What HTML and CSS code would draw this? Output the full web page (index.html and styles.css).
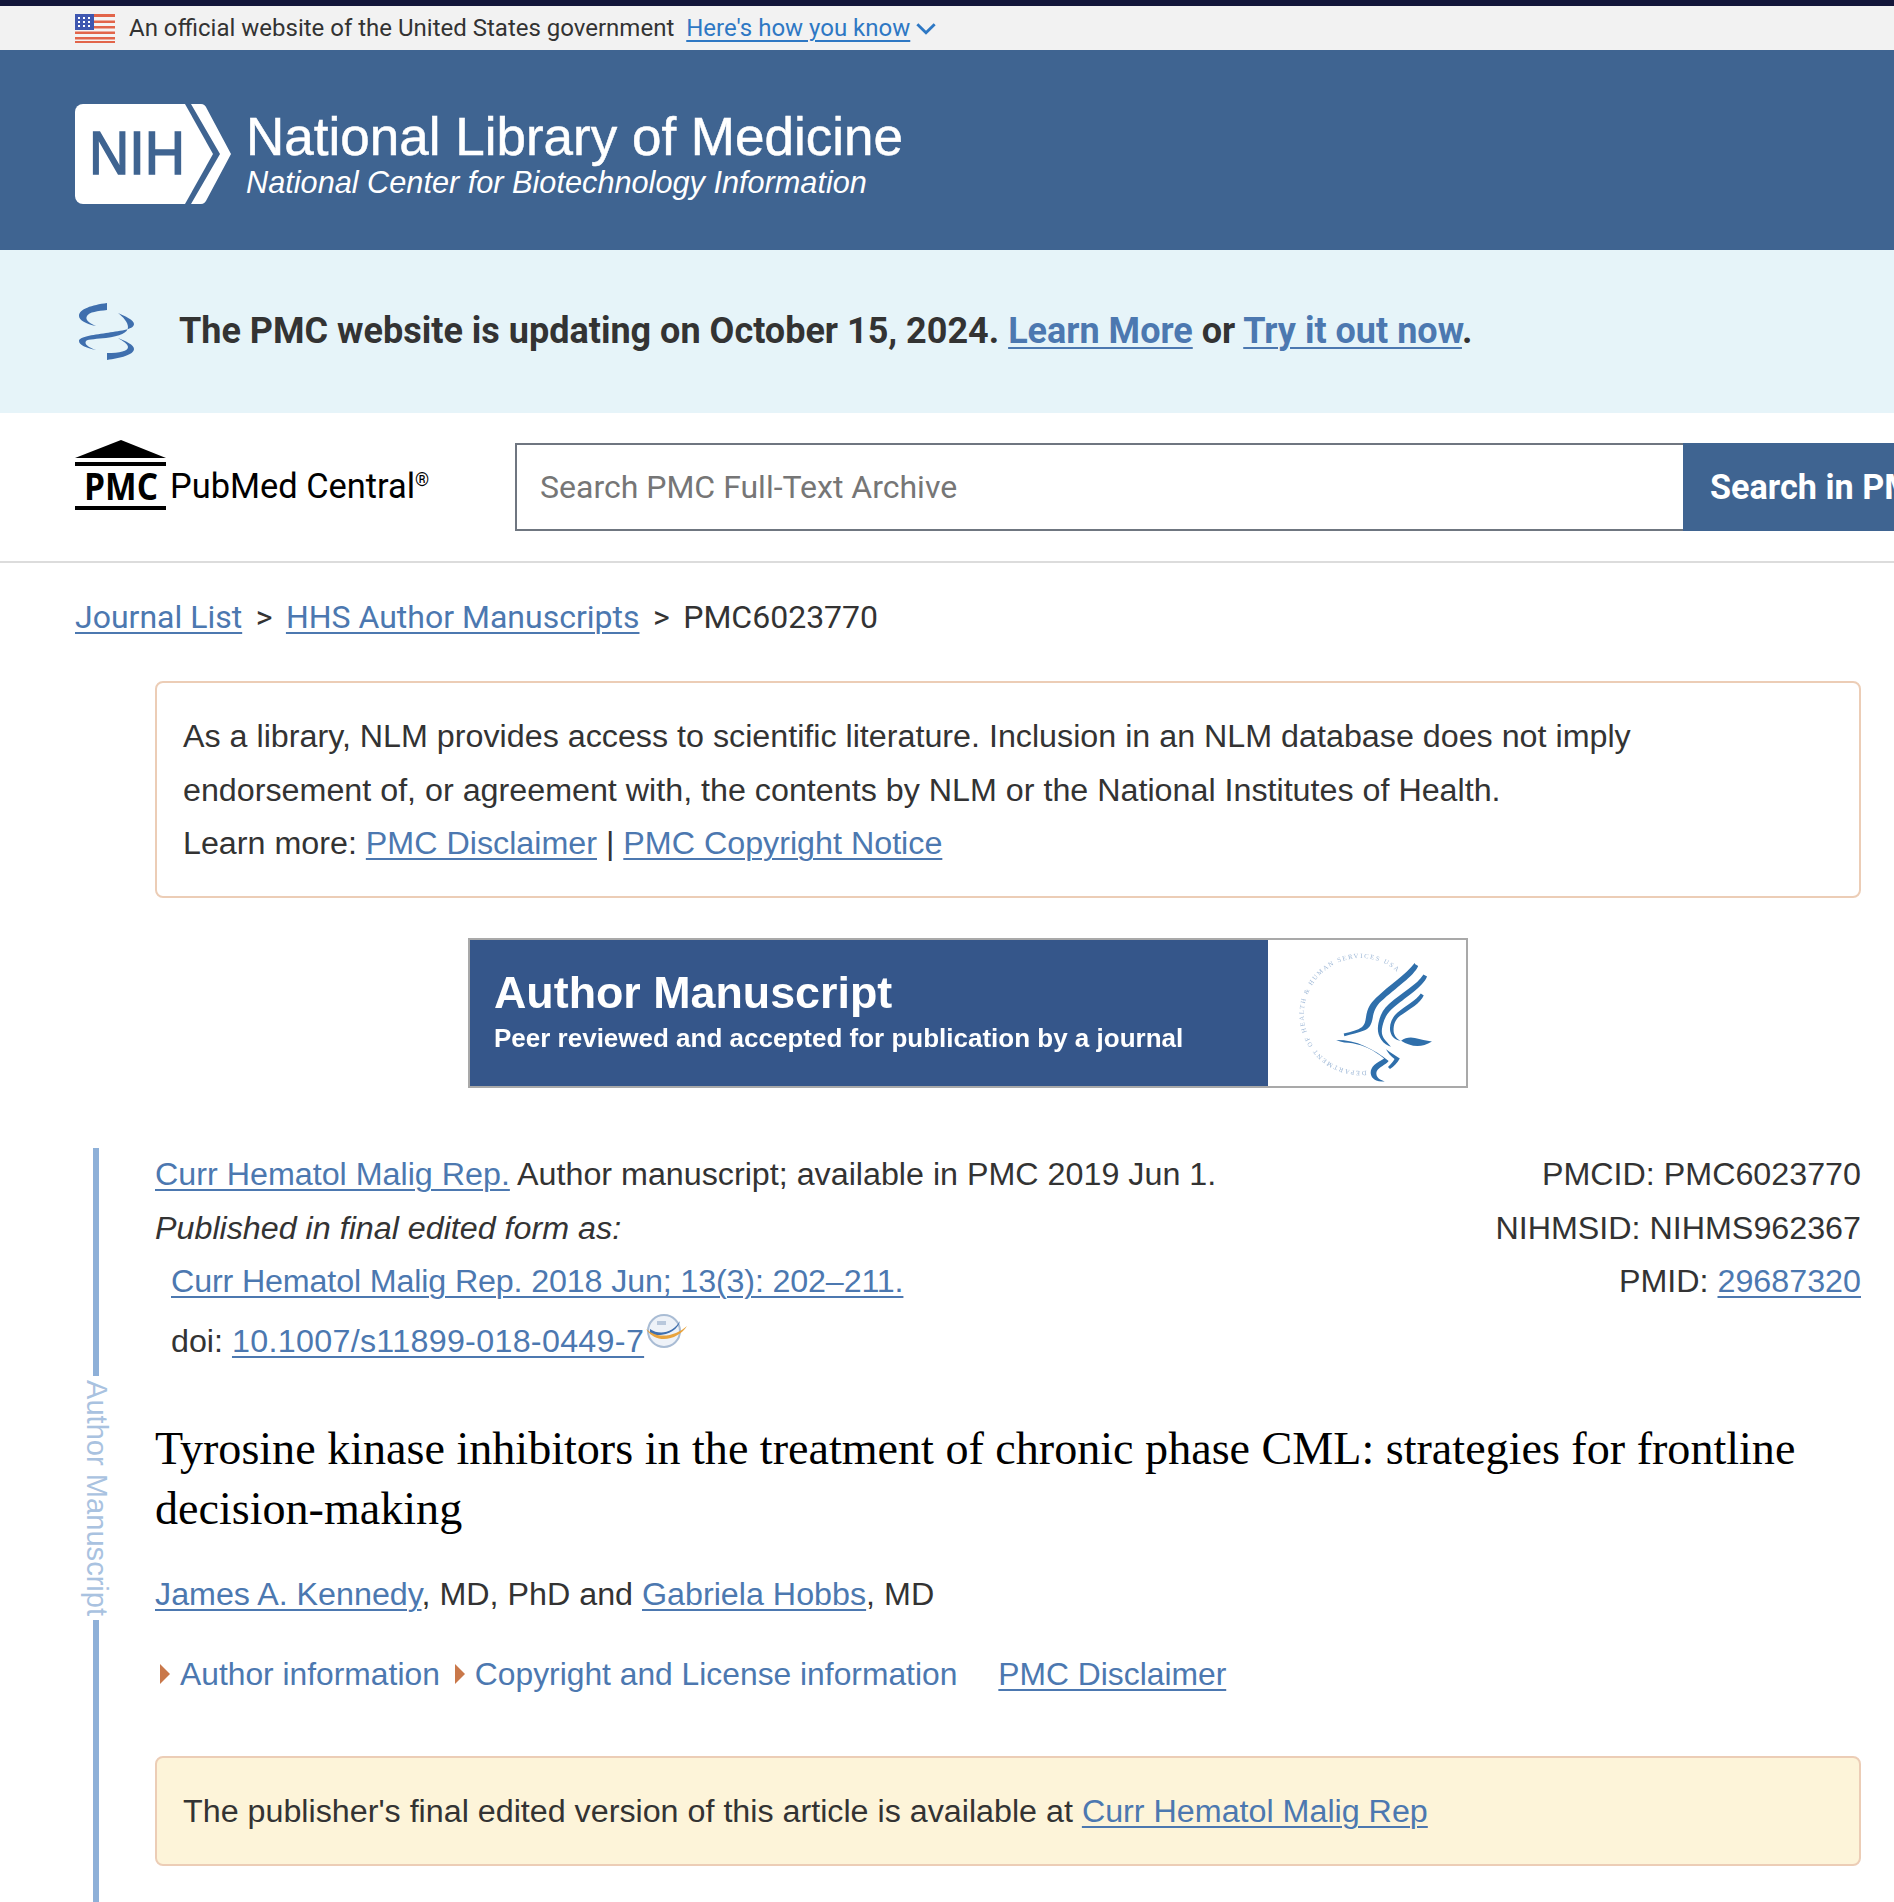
FILE: index.html
```html
<!DOCTYPE html>
<html lang="en">
<head>
    <meta charset="UTF-8">
    <meta name="viewport" content="width=device-width, initial-scale=1.0">
    <title>Tyrosine kinase inhibitors in the treatment of chronic phase CML - PMC</title>
    <link rel="stylesheet" href="styles.css">
</head>
<body>
    <div class="gov-banner">
        <svg class="flag" viewBox="0 0 40 29" width="40" height="29">
            <rect width="40" height="29" fill="#f4f4f4"/>
            <rect y="0" width="40" height="3" fill="#e2654a"/>
            <rect y="6.5" width="40" height="2.5" fill="#e2654a"/>
            <rect y="12" width="40" height="2.5" fill="#e2654a"/>
            <rect y="17.5" width="40" height="2.5" fill="#e2654a"/>
            <rect y="23" width="40" height="2.5" fill="#e2654a"/>
            <rect y="27" width="40" height="2" fill="#e2654a"/>
            <rect width="19" height="16" fill="#3f57b0"/>
            <g fill="#fff">
                <rect x="3" y="3" width="2" height="2"/><rect x="8" y="3" width="2" height="2"/><rect x="13" y="3" width="2" height="2"/>
                <rect x="3" y="7" width="2" height="2"/><rect x="8" y="7" width="2" height="2"/><rect x="13" y="7" width="2" height="2"/>
                <rect x="3" y="11" width="2" height="2"/><rect x="8" y="11" width="2" height="2"/><rect x="13" y="11" width="2" height="2"/>
            </g>
        </svg>
        <span class="gov-text">An official website of the United States government</span>
        <a class="gov-link" href="#">Here's how you know</a>
        <svg class="gov-chevron" viewBox="0 0 20 12" width="22" height="13"><path d="M2 2l8 8 8-8" fill="none" stroke="#2e78c4" stroke-width="2.6"/></svg>
    </div>

    <header class="nlm-header">
        <svg class="nih-logo" viewBox="0 0 156 100" width="156" height="100">
            <path d="M8 0h102l28 50-28 50H8a8 8 0 0 1-8-8V8a8 8 0 0 1 8-8z" fill="#fff"/>
            <path d="M116 0h10q4 0 6 5l24 45-24 45q-2 5-6 5h-10l29-50z" fill="#fff"/>
            <text x="14" y="70" class="nih-letters" textLength="96" lengthAdjust="spacingAndGlyphs">NIH</text>
        </svg>
        <div class="nlm-titles">
            <div class="nlm-name">National Library of Medicine</div>
            <div class="nlm-sub">National Center for Biotechnology Information</div>
        </div>
    </header>

    <div class="update-banner">
        <svg class="helix" viewBox="0 0 56 57" width="56" height="57">
            <g fill="#3f6fae">
                <path d="M29 0C14 2 1 6 1 13c0 4 7 8 17 10-8-3-11-7-9-10 2-4 11-5 20-6z"/>
                <path d="M40 10c7 3 16 7 16 11 0 6-16 7-28 9-14 2-27 4-27 8 0 4 7 7 17 9-8-3-12-6-10-9 2-2 12-2 20-3 14-2 22-5 22-11 0-5-5-10-10-14z"/>
                <path d="M40 35c8 3 16 7 16 11 0 6-14 9-27 11v-7c13 0 21-2 21-6 0-3-5-6-10-9z"/>
            </g>
        </svg>
        <p class="update-text">The PMC website is updating on October 15, 2024. <a href="#">Learn More</a> or <a href="#">Try it out now</a>.</p>
    </div>

    <div class="search-row">
        <div class="pmc-brand">
            <svg class="pmc-logo" viewBox="0 0 91 70" width="91" height="70">
                <path d="M46 0L91 18H0z" fill="#000"/>
                <rect y="22" width="91" height="4" fill="#000"/>
                <rect y="66" width="91" height="4" fill="#000"/>
                <text x="9" y="60" class="pmc-letters" textLength="74" lengthAdjust="spacingAndGlyphs">PMC</text>
            </svg>
            <span class="pmc-name">PubMed Central<sup>®</sup></span>
        </div>
        <div class="search-form">
            <div class="search-input">Search PMC Full-Text Archive</div>
            <div class="search-button">Search in PMC</div>
        </div>
    </div>

    <nav class="breadcrumb">
        <a href="#">Journal List</a><span class="crumb-sep">&gt;</span><a href="#">HHS Author Manuscripts</a><span class="crumb-sep">&gt;</span><span>PMC6023770</span>
    </nav>

    <main class="content">
        <div class="disclaimer">
            <p>As a library, NLM provides access to scientific literature. Inclusion in an NLM database does not imply endorsement of, or agreement with, the contents by NLM or the National Institutes of Health.</p>
            <p>Learn more: <a href="#">PMC Disclaimer</a> | <a href="#">PMC Copyright Notice</a></p>
        </div>

        <div class="am-banner">
            <div class="am-left">
                <div class="am-title">Author Manuscript</div>
                <div class="am-sub">Peer reviewed and accepted for publication by a journal</div>
            </div>
            <svg class="am-seal" viewBox="54 25 596 445" width="198" height="146">
                <defs><path id="seal-ring" d="M350 423A172 172 0 1 1 470 150"/></defs>
                <text class="seal-text"><textPath href="#seal-ring" textLength="680">DEPARTMENT OF HEALTH &amp; HUMAN SERVICES USA</textPath></text>
                <g fill="#2f6fab">
                    <path d="M498 98l10 6C495 135 440 170 395 212c-16 15-22 30-26 52-3 18-10 30-24 36-20 8-40 12-62 18l-2-8c24-6 42-10 56-20 8-6 10-16 12-30 4-26 12-40 30-58 40-40 90-70 119-108z"/>
                    <path d="M524 130l11 6c-12 32-65 62-108 100-16 14-24 34-28 52-4 18-2 30 8 42l18 20c-10-2-22-10-30-22-10-16-12-30-8-50 5-24 14-42 32-58 40-36 85-58 105-90z"/>
                    <path d="M516 188l9 6c-10 24-44 42-72 62-16 12-20 28-20 44 0 14 8 26 22 32-14 0-28-10-32-28-4-20 4-42 22-58 26-22 56-36 71-58z"/>
                    <path d="M456 332c12-8 26-12 42-8 18 4 34 8 52 10-16 10-30 14-44 14-18 0-34-6-50-16z"/>
                    <path d="M258 330c32 0 60 6 86 18 28 12 52 28 74 46-10 12-28 18-36 30-4 10 0 20 10 26l14 6c-18 2-30-2-38-12-8-12-6-26 6-38 8-8 22-14 30-20-30-24-62-40-96-46-16-2-34-2-50-10z"/>
                    <path d="M410 358c14 10 28 20 42 28-8 14-18 24-30 32l-6-6c8-8 16-16 20-24-10-8-20-18-26-30z"/>
                </g>
            </svg>
        </div>

        <div class="article-row">
            <div class="am-side">
                <div class="side-line side-line-top"></div>
                <div class="side-label">Author Manuscript</div>
                <div class="side-line side-line-bottom"></div>
            </div>
            <article class="article">
                <div class="citation">
                    <div class="cite-left">
                        <div><a href="#">Curr Hematol Malig Rep.</a> Author manuscript; available in PMC 2019 Jun 1.</div>
                        <div class="cite-note">Published in final edited form as:</div>
                        <div class="cite-indent cite-journal"><a href="#">Curr Hematol Malig Rep. 2018 Jun; 13(3): 202–211.</a></div>
                        <div class="cite-indent cite-doi">doi: <a class="doi-link" href="#">10.1007/s11899-018-0449-7</a><svg class="cross-mark" viewBox="0 0 44 34" width="44" height="34">
                                <circle cx="20" cy="17" r="16" fill="#eef2f8" stroke="#a9bcd4" stroke-width="2"/>
                                <rect x="13" y="7" width="9" height="4" fill="#b9c8dc"/>
                                <path d="M6 15c10 7 24 3 30-8-2 10-16 17-30 13z" fill="#3f6fae"/>
                                <path d="M2 15c12 11 30 7 41-3-8 13-30 20-41 3z" fill="#e8a33d"/>
                            </svg></div>
                    </div>
                    <div class="cite-right">
                        <div>PMCID: PMC6023770</div>
                        <div>NIHMSID: NIHMS962367</div>
                        <div>PMID: <a href="#">29687320</a></div>
                    </div>
                </div>

                <h1 class="article-title">Tyrosine kinase inhibitors in the treatment of chronic phase CML: strategies for frontline decision-making</h1>

                <div class="authors"><a href="#">James A. Kennedy</a>, MD, PhD and <a href="#">Gabriela Hobbs</a>, MD</div>

                <div class="article-links">
                    <span class="toggle"><span class="arrow"></span>Author information</span>
                    <span class="toggle"><span class="arrow"></span>Copyright and License information</span>
                    <a class="plain-disclaimer" href="#">PMC Disclaimer</a>
                </div>

                <div class="publisher-note">The publisher's final edited version of this article is available at <a href="#">Curr Hematol Malig Rep</a></div>
            </article>
        </div>
    </main>
</body>
</html>
```

FILE: styles.css
```css
html, body {
    margin: 0;
    padding: 0;
    height: 1902px;
    overflow: hidden;
    background-color: #fff;
}
body {
    font-family: "Liberation Sans", Arial, sans-serif;
    font-size: 32.25px;
    line-height: 53.5px;
    color: #333;
}
a {
    color: #4c78b0;
    text-decoration: underline;
    text-decoration-thickness: 2px;
    text-underline-offset: 4px;
}
p {
    margin: 0;
}

.gov-banner {
    box-sizing: border-box;
    height: 50px;
    border-top: 6px solid #13163a;
    background-color: #f2f2f2;
    padding-left: 75px;
    display: flex;
    align-items: center;
    font-family: Roboto, sans-serif;
    font-size: 24px;
    line-height: 30px;
}
.flag {
    margin-right: 14px;
}
.gov-text {
    color: #333;
    margin-right: 12px;
}
.gov-link {
    color: #2e78c4;
}
.gov-chevron {
    margin-left: 5px;
}

.nlm-header {
    box-sizing: border-box;
    height: 200px;
    background-color: #3f6491;
    padding: 8px 0 0 75px;
    display: flex;
    align-items: center;
    color: #fff;
}
.nih-logo {
    margin-right: 15px;
}
.nih-letters {
    font-family: "Liberation Sans", sans-serif;
    font-size: 61px;
    fill: #3f6491;
    stroke: #3f6491;
    stroke-width: 1.5px;
}
.nlm-name {
    font-size: 53px;
    line-height: 57px;
    -webkit-text-stroke: 0.5px #fff;
}
.nlm-sub {
    font-size: 30.7px;
    line-height: 36px;
    font-style: italic;
}

.update-banner {
    height: 163px;
    background-color: #e6f4f9;
    padding-left: 78px;
    display: flex;
    align-items: center;
}
.helix {
    margin-right: 45px;
}
.update-text {
    font-family: Roboto, sans-serif;
    font-weight: 700;
    font-size: 36px;
    color: #333;
}

.search-row {
    box-sizing: border-box;
    height: 150px;
    border-bottom: 2px solid #dcdcdc;
    padding-left: 75px;
    display: flex;
    align-items: center;
}
.pmc-brand {
    box-sizing: border-box;
    width: 440px;
    display: flex;
    align-items: center;
}
.pmc-logo {
    margin: 0 4px 24px 0;
}
.pmc-letters {
    font-family: "Open Sans", sans-serif;
    font-weight: 700;
    font-size: 37px;
    fill: #000;
}
.pmc-name {
    font-family: Roboto, sans-serif;
    font-size: 34.4px;
    color: #000;
}
.pmc-name sup {
    font-size: 18px;
    line-height: 0;
}
.search-form {
    flex: 1;
    display: flex;
    height: 88px;
    min-width: 0;
    font-family: Roboto, sans-serif;
    font-size: 32px;
}
.search-input {
    box-sizing: border-box;
    width: 1168px;
    border: 2px solid #6f7680;
    border-right: none;
    padding-left: 23px;
    line-height: 84px;
    color: #767676;
}
.search-button {
    flex: 1;
    min-width: 0;
    background-color: #3f6491;
    color: #fff;
    font-size: 34.2px;
    font-weight: 700;
    padding-left: 27px;
    line-height: 88px;
    white-space: nowrap;
    overflow: hidden;
}

.breadcrumb {
    padding: 28px 0 0 75px;
    font-family: Roboto, sans-serif;
    font-size: 32px;
    line-height: 53px;
}
.crumb-sep {
    margin: 0 13.5px;
}

.content {
    padding-left: 155px;
    padding-right: 33px;
}
.disclaimer {
    box-sizing: border-box;
    margin-top: 37px;
    height: 217px;
    border: 2px solid #eccdb6;
    border-radius: 8px;
    padding: 27px 100px 27px 26px;
}

.am-banner {
    box-sizing: border-box;
    width: 1000px;
    height: 150px;
    margin: 40px 0 0 313px;
    border: 2px solid #a9a9a9;
    display: flex;
}
.am-left {
    box-sizing: border-box;
    flex: none;
    width: 798px;
    background-color: #35568a;
    color: #fff;
    padding-left: 24px;
    white-space: nowrap;
}
.am-title {
    font-size: 44.8px;
    font-weight: 700;
    line-height: 50px;
    margin-top: 27px;
    filter: blur(0.4px);
}
.am-sub {
    font-size: 26px;
    font-weight: 700;
    line-height: 36px;
    margin-top: 3px;
    filter: blur(0.4px);
}
.am-seal {
    flex: none;
    filter: blur(0.5px);
}
.seal-text {
    font-family: "Liberation Serif", serif;
    font-size: 20px;
    fill: #9db7d6;
}

.article-row {
    display: flex;
    margin-top: 60px;
    margin-left: -80px;
}
.am-side {
    box-sizing: border-box;
    flex: none;
    width: 80px;
    height: 756px;
    display: flex;
    flex-direction: column;
    align-items: flex-start;
    padding-left: 15px;
}
.side-line {
    width: 6px;
    background-color: #8eb0d8;
    margin-left: 3px;
}
.side-line-top {
    height: 228px;
}
.side-line-bottom {
    flex: 1;
}
.side-label {
    writing-mode: vertical-rl;
    font-size: 29.1px;
    line-height: 30px;
    color: #a9c2e0;
    margin: 4px 0 4px -8px;
    white-space: nowrap;
}

.article {
    flex: 1;
    min-width: 0;
}
.citation {
    display: flex;
    justify-content: space-between;
}
.cite-note {
    font-style: italic;
}
.cite-indent {
    padding-left: 16px;
}
.cite-journal {
    letter-spacing: -0.15px;
}
.cite-doi {
    margin-top: 6px;
    display: flex;
    white-space: pre;
}
.doi-link {
    letter-spacing: 0.3px;
}
.cross-mark {
    align-self: flex-start;
    margin-top: -1px;
}
.cite-right {
    text-align: right;
}

.article-title {
    margin: 51px 0 0;
    font-family: "Liberation Serif", serif;
    font-weight: 400;
    font-size: 46.1px;
    line-height: 60px;
    color: #000;
}
.authors {
    margin-top: 29px;
}
.article-links {
    margin-top: 26px;
    display: flex;
    align-items: center;
    font-size: 31.8px;
}
.toggle {
    color: #4c78b0;
    margin-right: 10px;
    display: flex;
    align-items: center;
}
.arrow {
    width: 0;
    height: 0;
    border-left: 10px solid #c9784a;
    border-top: 10px solid transparent;
    border-bottom: 10px solid transparent;
    margin: 0 10px 0 5px;
}
.plain-disclaimer {
    margin-left: 31px;
}
.publisher-note {
    box-sizing: border-box;
    margin-top: 55px;
    height: 110px;
    border: 2px solid #eccdb6;
    border-radius: 8px;
    background-color: #fdf4d9;
    padding: 0 26px;
    line-height: 106px;
}
```
